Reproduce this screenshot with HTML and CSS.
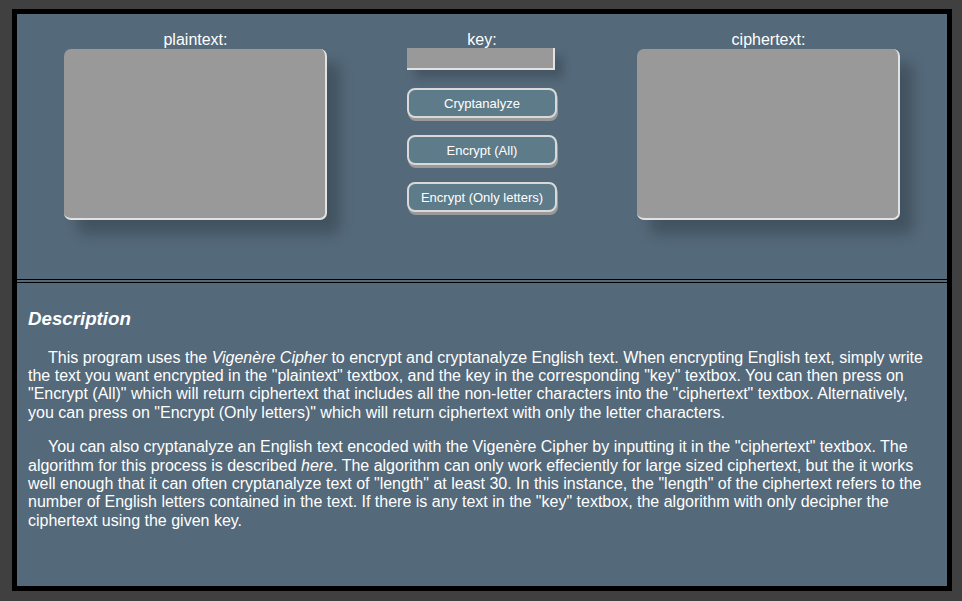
FILE: index.html
```html
<!DOCTYPE html>
<html lang="en">
<head>
<meta charset="utf-8">
<title>Vigenère Cipher</title>
<link rel="stylesheet" href="styles.css">
</head>
<body>
<div class="frame">
  <section class="tools">
    <div class="col col-left">
      <div class="field">
        <label class="label" for="pt">plaintext:</label>
        <textarea id="pt" class="box"></textarea>
      </div>
    </div>
    <div class="col col-mid">
      <div class="controls">
        <label class="label" for="key">key:</label>
        <input id="key" class="key" type="text">
        <button class="btn first">Cryptanalyze</button>
        <button class="btn">Encrypt (All)</button>
        <button class="btn">Encrypt (Only letters)</button>
      </div>
    </div>
    <div class="col col-right">
      <div class="field">
        <label class="label" for="ct">ciphertext:</label>
        <textarea id="ct" class="box"></textarea>
      </div>
    </div>
  </section>
  <div class="divider"></div>
  <section class="desc">
    <h3 class="title">Description</h3>
    <p class="para">This program uses the <em>Vigenère Cipher</em> to encrypt and cryptanalyze English text. When encrypting English text, simply write the text you want encrypted in the "plaintext" textbox, and the key in the corresponding "key" textbox. You can then press on "Encrypt (All)" which will return ciphertext that includes all the non-letter characters into the "ciphertext" textbox. Alternatively, you can press on "Encrypt (Only letters)" which will return ciphertext with only the letter characters.</p>
    <p class="para">You can also cryptanalyze an English text encoded with the Vigenère Cipher by inputting it in the "ciphertext" textbox. The algorithm for this process is described <em>here</em>. The algorithm can only work effeciently for large sized ciphertext, but the it works well enough that it can often cryptanalyze text of "length" at least 30. In this instance, the "length" of the ciphertext refers to the number of English letters contained in the text. If there is any text in the "key" textbox, the algorithm with only decipher the ciphertext using the given key.</p>
  </section>
</div>
</body>
</html>
```

FILE: styles.css
```css
html, body {
  margin: 0;
  padding: 0;
}
body {
  background: #404040;
  font-family: "Liberation Sans", Arial, sans-serif;
  color: #ffffff;
  padding: 9px 0 0 12px;
}
.frame {
  width: 930px;
  height: 572px;
  border: 5px solid #000000;
  background: #54697a;
  display: flex;
  flex-direction: column;
}
.tools {
  height: 265px;
  box-sizing: border-box;
  padding-top: 16px;
  display: grid;
  grid-template-columns: 310px 310px 310px;
  flex: none;
}
.col {
  display: flex;
}
.col-left { justify-content: flex-end; }
.col-mid { justify-content: center; }
.col-right { justify-content: flex-start; }
.field {
  display: flex;
  flex-direction: column;
  align-items: center;
  width: 263px;
}
.label {
  display: block;
  font-size: 16px;
  line-height: 19px;
  color: #ffffff;
  text-align: center;
  align-self: stretch;
}
.box {
  display: block;
  width: 263px;
  height: 171px;
  box-sizing: border-box;
  margin: 0;
  padding: 4px;
  background: #999999;
  border-style: solid;
  border-width: 0 2px 2px 0;
  border-color: #e2e2e2;
  border-radius: 7px;
  resize: none;
  outline: none;
  font-family: "Liberation Sans", Arial, sans-serif;
  box-shadow: 13px 14px 14px rgba(0, 0, 0, 0.22);
}
.controls {
  display: flex;
  flex-direction: column;
  align-items: flex-start;
  width: 150px;
}
.controls .label {
  margin-bottom: -1px;
}
.key {
  display: block;
  width: 148px;
  height: 22px;
  box-sizing: border-box;
  margin: 0;
  padding: 0 3px;
  background: #999999;
  border-style: solid;
  border-width: 0 2px 2px 0;
  border-color: #e2e2e2;
  border-radius: 0;
  outline: none;
  box-shadow: 8px 8px 10px rgba(0, 0, 0, 0.18);
}
.btn {
  display: block;
  width: 150px;
  height: 30px;
  margin: 17px 0 0 0;
  padding: 0;
  box-sizing: border-box;
  background: #5e7b89;
  color: #ffffff;
  font-family: "Liberation Sans", Arial, sans-serif;
  font-size: 13px;
  border: 2px solid #d9d9d9;
  border-radius: 8px;
  box-shadow: 1px 3px 0 #9a9a9a;
  cursor: pointer;
}
.btn.first {
  margin-top: 18px;
}
.divider {
  flex: none;
  height: 2px;
  border-top: 1px solid #000000;
  border-bottom: 1px solid #000000;
}
.desc {
  flex: 1;
  padding: 25px 11px 0 11px;
}
.title {
  margin: 0 0 19px 0;
  font-size: 18.72px;
  font-weight: bold;
  font-style: italic;
  line-height: 21.5px;
}
.para {
  margin: 0 0 16px 0;
  font-size: 16px;
  line-height: 18.4px;
  text-indent: 20px;
}
.para em {
  font-style: italic;
}
```
